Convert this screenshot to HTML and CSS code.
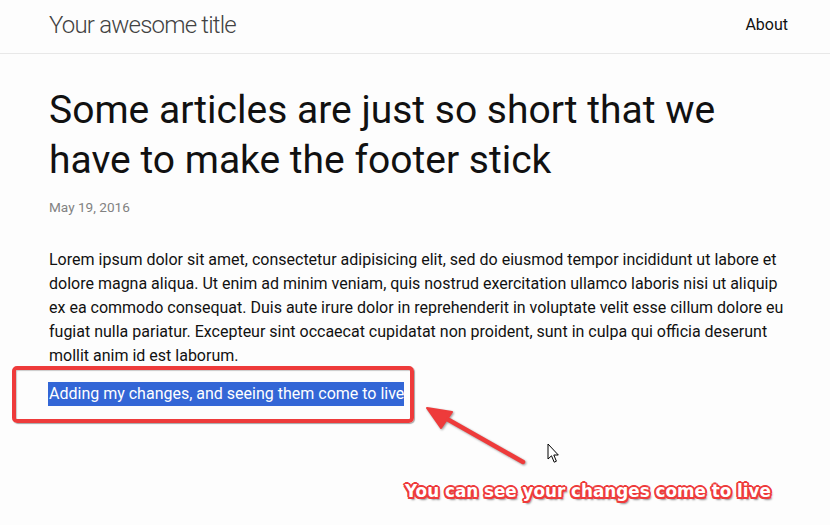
FILE: index.html
```html
<!DOCTYPE html>
<html lang="en">
<head>
<meta charset="utf-8">
<title>Your awesome title</title>
<link rel="stylesheet" href="styles.css">
</head>
<body>
<div class="page">
  <header class="site-header">
    <div class="wrapper header-row">
      <a class="site-title" href="#">Your awesome title</a>
      <nav class="site-nav"><a class="page-link" href="#">About</a></nav>
    </div>
  </header>

  <main class="page-content">
    <div class="wrapper">
      <article class="post">
        <header class="post-header">
          <h1 class="post-title">Some articles are just so short that we have to make the footer stick</h1>
          <p class="post-meta">May 19, 2016</p>
        </header>
        <div class="post-content">
          <p>Lorem ipsum dolor sit amet, consectetur adipisicing elit, sed do eiusmod tempor incididunt ut labore et dolore magna aliqua. Ut enim ad minim veniam, quis nostrud exercitation ullamco laboris nisi ut aliquip ex ea commodo consequat. Duis aute irure dolor in reprehenderit in voluptate velit esse cillum dolore eu fugiat nulla pariatur. Excepteur sint occaecat cupidatat non proident, sunt in culpa qui officia deserunt mollit anim id est laborum.</p>
          <p><span class="selected">Adding my changes, and seeing them come to live</span></p>
        </div>
      </article>
    </div>
  </main>

  <div class="callout-box"></div>
  <svg class="callout-arrow" width="120" height="80" viewBox="0 0 120 80">
    <line x1="113" y1="59" x2="30" y2="12" stroke="#ee3b3b" stroke-width="4.5" stroke-linecap="round"/>
    <polygon points="17,5 42,9 31,25" fill="#ee3b3b" stroke="#ee3b3b" stroke-width="2" stroke-linejoin="round"/>
  </svg>
  <svg class="cursor" width="14" height="22" viewBox="0 0 14 22">
    <path d="M1 1 L1 16 L4.5 12.8 L7.2 19.2 L9.4 18.2 L6.8 12 L11.3 12 Z" fill="#fff" stroke="#000" stroke-width="1" stroke-linejoin="miter"/>
  </svg>
  <div class="callout-text">You can see your changes come to live</div>
</div>
</body>
</html>
```
FILE: styles.css
```css
* { box-sizing: border-box; }

html, body {
  margin: 0;
  padding: 0;
  background: #fdfdfd;
}

body {
  font-family: Roboto, "Liberation Sans", sans-serif;
  font-size: 16px;
  line-height: 24px;
  color: #111;
}

.page {
  position: relative;
  width: 830px;
  height: 525px;
  overflow: hidden;
}

.wrapper {
  padding: 0 40px 0 49px;
}

/* Header */
.site-header {
  height: 54px;
  border-bottom: 1px solid #e8e8e8;
}

.header-row {
  display: flex;
  justify-content: space-between;
  align-items: flex-start;
}

.site-title {
  font-size: 24px;
  font-weight: 300;
  letter-spacing: -0.8px;
  line-height: 50px;
  color: #424242;
  text-decoration: none;
}

.page-link {
  font-size: 16px;
  line-height: 50px;
  color: #111;
  text-decoration: none;
  margin-right: 2px;
}

/* Content */
.page-content {
  padding-top: 31px;
}

.post-header {
  margin-bottom: 30px;
}

.post-title {
  margin: 0;
  font-size: 39px;
  font-weight: 400;
  line-height: 50px;
  color: #111;
}

.post-meta {
  margin: 12px 0 0;
  font-size: 13.6px;
  line-height: 21px;
  color: #828282;
}

.post-content p {
  margin: 0 0 14px;
}

.selected {
  display: inline-block;
  line-height: 24px;
  background: #3366d6;
  color: #fff;
  padding-left: 1px;
  margin-left: -1px;
}

/* Annotation overlay */
.callout-box {
  position: absolute;
  left: 12px;
  top: 366px;
  width: 402px;
  height: 57px;
  border: 4px solid #ee3b3b;
  border-radius: 5px;
  box-shadow: 1px 1px 1px rgba(0, 0, 0, 0.35), inset 1px 1px 1px rgba(0, 0, 0, 0.2);
}

.callout-arrow {
  position: absolute;
  left: 410px;
  top: 403px;
  filter: drop-shadow(1px 1px 1px rgba(0, 0, 0, 0.4));
}

.cursor {
  position: absolute;
  left: 547px;
  top: 443px;
}

.callout-text {
  position: absolute;
  left: 405px;
  top: 481px;
  font-family: "DejaVu Sans", sans-serif;
  font-weight: 700;
  font-size: 16.8px;
  line-height: 20px;
  letter-spacing: 0;
  color: #fff;
  white-space: nowrap;
  text-shadow:
    -2px 0 0 #ee3b3b, 2px 0 0 #ee3b3b, 0 -2px 0 #ee3b3b, 0 2px 0 #ee3b3b,
    -1.5px -1.5px 0 #ee3b3b, 1.5px -1.5px 0 #ee3b3b, -1.5px 1.5px 0 #ee3b3b, 1.5px 1.5px 0 #ee3b3b,
    2px 3px 2px rgba(0, 0, 0, 0.45);
}
```
